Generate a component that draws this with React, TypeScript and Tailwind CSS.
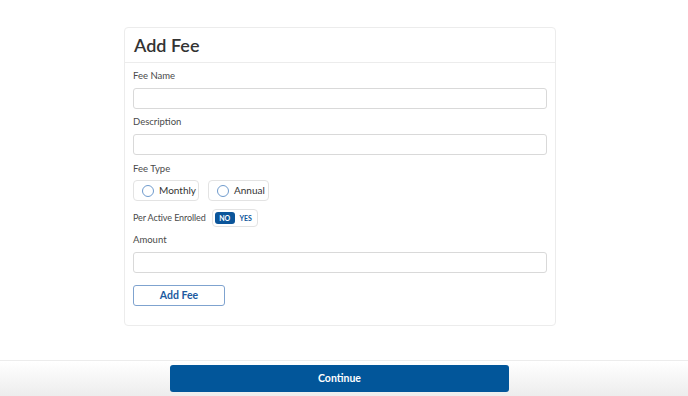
import { useState } from 'react';

function Field({ label }: { label: string }) {
  return (
    <div className="flex flex-col">
      <label className="text-[9.5px] leading-[12px] text-[#4a4a4a]">{label}</label>
      <input className="mt-[6px] h-[21px] w-full rounded-[3px] border border-[#d9d9d9] bg-white outline-none" />
    </div>
  );
}

function Radio({ label, width }: { label: string; width: string }) {
  return (
    <div className={`flex h-[21px] items-center gap-[5px] rounded-[4px] border border-[#e3e3e3] pl-[8px] ${width}`}>
      <span className="h-[12px] w-[12px] rounded-full border border-[#6f9bcd]" />
      <span className="text-[10px] text-[#333]">{label}</span>
    </div>
  );
}

export default function App() {
  const [enrolled, setEnrolled] = useState(false);

  return (
    <div className="flex h-[396px] w-[688px] flex-col bg-white font-['Lato',sans-serif]">
      <div className="flex-1 pt-[27px]">
        <div className="ml-[124px] w-[432px] rounded-[4px] border border-[#ececec]">
          <div className="flex h-[35px] items-center border-b border-[#ececec] px-[9px]">
            <h1 className="text-[18px] font-semibold text-[#333]">Add Fee</h1>
          </div>
          <div className="flex flex-col px-[8px] pb-[19px] pt-[7px]">
            <Field label="Fee Name" />
            <div className="mt-[7px]">
              <Field label="Description" />
            </div>
            <div className="mt-[8px] flex flex-col">
              <label className="text-[9.5px] leading-[12px] text-[#4a4a4a]">Fee Type</label>
              <div className="mt-[5px] flex gap-[9px]">
                <Radio label="Monthly" width="w-[66px]" />
                <Radio label="Annual" width="w-[61px]" />
              </div>
            </div>
            <div className="mt-[8px] flex items-center gap-[6px]">
              <span className="text-[9px] tracking-[-0.1px] text-[#4a4a4a]">Per Active Enrolled</span>
              <button
                onClick={() => setEnrolled(!enrolled)}
                className="flex h-[18px] w-[46px] items-center gap-[2px] rounded-[4px] border border-[#e3e3e3] px-[2px] text-[7px] font-bold"
              >
                <span className={`flex h-[12px] w-[20px] items-center justify-center rounded-[3px] ${!enrolled ? 'bg-[#0b559a] text-white' : 'text-[#0b559a]'}`}>NO</span>
                <span className={`flex h-[12px] w-[18px] items-center justify-center rounded-[3px] ${enrolled ? 'bg-[#0b559a] text-white' : 'text-[#0b559a]'}`}>YES</span>
              </button>
            </div>
            <div className="mt-[7px]">
              <Field label="Amount" />
            </div>
            <button className="mt-[12px] h-[21px] w-[92px] rounded-[3px] border border-[#7fa3cf] text-[10.5px] font-bold text-[#1d5aa0]">
              Add Fee
            </button>
          </div>
        </div>
      </div>
      <div className="flex h-[36px] border-t border-[#ececec] bg-gradient-to-b from-white to-[#ededed] pt-[4px]">
        <button className="ml-[170px] h-[27px] w-[339px] rounded-[3px] bg-[#02569a] text-[10.5px] font-bold text-white">Continue</button>
      </div>
    </div>
  );
}
